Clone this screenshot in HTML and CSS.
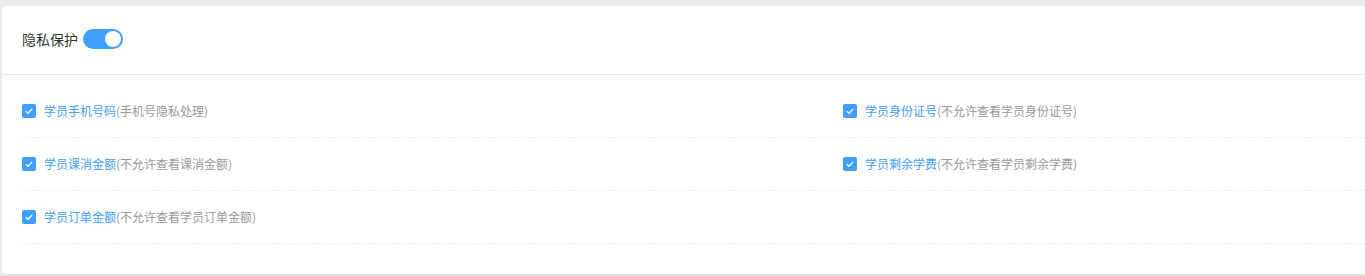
FILE: index.html
```html
<!DOCTYPE html>
<html lang="zh">
<head>
<meta charset="utf-8">
<link rel="stylesheet" href="styles.css">
</head>
<body>
<div class="card">
  <div class="card-header">
    <span class="title">隐私保护</span>
    <span class="switch on"><span class="knob"></span></span>
  </div>
  <div class="card-body">
    <div class="row">
      <div class="item"><span class="cb"><svg viewBox="0 0 14 14" width="14" height="14"><path d="M3.8 7.2 L6 9.3 L10.2 4.9" fill="none" stroke="#fff" stroke-width="1.3"/></svg></span><span class="label">学员手机号码</span><span class="desc">(手机号隐私处理)</span></div>
      <div class="item"><span class="cb"><svg viewBox="0 0 14 14" width="14" height="14"><path d="M3.8 7.2 L6 9.3 L10.2 4.9" fill="none" stroke="#fff" stroke-width="1.3"/></svg></span><span class="label">学员身份证号</span><span class="desc">(不允许查看学员身份证号)</span></div>
    </div>
    <div class="row">
      <div class="item"><span class="cb"><svg viewBox="0 0 14 14" width="14" height="14"><path d="M3.8 7.2 L6 9.3 L10.2 4.9" fill="none" stroke="#fff" stroke-width="1.3"/></svg></span><span class="label">学员课消金额</span><span class="desc">(不允许查看课消金额)</span></div>
      <div class="item"><span class="cb"><svg viewBox="0 0 14 14" width="14" height="14"><path d="M3.8 7.2 L6 9.3 L10.2 4.9" fill="none" stroke="#fff" stroke-width="1.3"/></svg></span><span class="label">学员剩余学费</span><span class="desc">(不允许查看学员剩余学费)</span></div>
    </div>
    <div class="row">
      <div class="item"><span class="cb"><svg viewBox="0 0 14 14" width="14" height="14"><path d="M3.8 7.2 L6 9.3 L10.2 4.9" fill="none" stroke="#fff" stroke-width="1.3"/></svg></span><span class="label">学员订单金额</span><span class="desc">(不允许查看学员订单金额)</span></div>
    </div>
  </div>
</div>
</body>
</html>
```
FILE: styles.css
```css
html, body {
  margin: 0;
  padding: 0;
  background: #ebebeb;
  overflow: hidden;
}
body {
  padding: 6px 0 0 2px;
  font-family: "Noto Sans CJK SC", "Liberation Sans", sans-serif;
  height: 276px;
  box-sizing: border-box;
}
.card {
  width: 1400px;
  height: 268px;
  background: #fff;
  border-radius: 4px;
  box-shadow: 0 1px 2px rgba(0,0,0,0.06);
  box-sizing: border-box;
}
.card-header {
  height: 69px;
  display: flex;
  align-items: center;
  padding-left: 20px;
  border-bottom: 1px solid #e4e7ed;
  box-sizing: border-box;
}
.title {
  font-size: 14px;
  color: #303133;
  line-height: 20px;
  margin-top: -3px;
}
.switch {
  margin-left: 5px;
  width: 40px;
  height: 20px;
  border-radius: 10px;
  background: #409eff;
  display: flex;
  align-items: center;
  justify-content: flex-end;
  padding: 0 2px;
  box-sizing: border-box;
  margin-top: -2px;
}
.knob {
  width: 16px;
  height: 16px;
  border-radius: 50%;
  background: #fff;
}
.card-body {
  padding: 10px 0 0 20px;
}
.row {
  display: grid;
  grid-template-columns: 821px 1fr;
  height: 53px;
  border-bottom: 1px dashed #f0f0f0;
  box-sizing: border-box;
}
.item {
  display: flex;
  align-items: center;
  font-size: 12px;
  line-height: 16px;
}
.cb {
  width: 14px;
  height: 14px;
  background: #409eff;
  border-radius: 2px;
  display: inline-flex;
  margin-right: 8px;
}
.cb svg { display: block; }
.label { color: #409eff; }
.desc { color: #999999; }
```
